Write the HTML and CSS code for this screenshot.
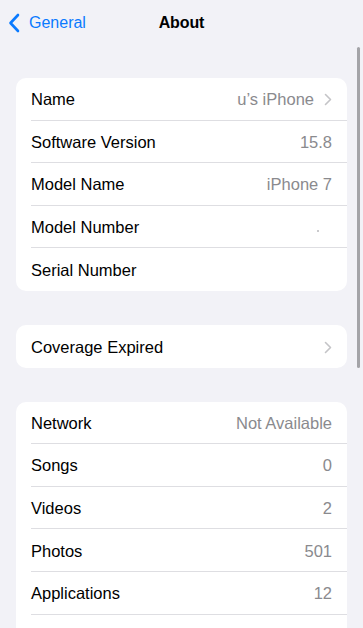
FILE: index.html
```html
<!DOCTYPE html>
<html lang="en">
<head>
<meta charset="utf-8">
<title>About</title>
<link rel="stylesheet" href="styles.css">
</head>
<body>
<div class="screen">
  <header class="nav">
    <a class="back">
      <svg class="back-icon" width="12" height="20" viewBox="0 0 12 20"><path d="M10 2 L2.5 10 L10 18" fill="none" stroke="#0a7aff" stroke-width="2.6" stroke-linecap="round" stroke-linejoin="round"/></svg>
      <span>General</span>
    </a>
    <h1 class="title">About</h1>
  </header>

  <main class="content">
    <section class="card">
      <div class="row"><div class="row-inner"><span class="label">Name</span><span class="value">u’s iPhone</span><svg class="chev" width="8" height="13" viewBox="0 0 8 13"><path d="M1.5 1.5 L6.5 6.5 L1.5 11.5" fill="none" stroke="#c4c4c7" stroke-width="1.6" stroke-linecap="round" stroke-linejoin="round"/></svg></div></div>
      <div class="row"><div class="row-inner"><span class="label">Software Version</span><span class="value">15.8</span></div></div>
      <div class="row"><div class="row-inner"><span class="label">Model Name</span><span class="value">iPhone 7</span></div></div>
      <div class="row"><div class="row-inner"><span class="label">Model Number</span><span class="value"><span class="dot"></span></span></div></div>
      <div class="row"><div class="row-inner last"><span class="label">Serial Number</span><span class="value"></span></div></div>
    </section>

    <section class="card">
      <div class="row"><div class="row-inner last"><span class="label">Coverage Expired</span><span class="value"></span><svg class="chev" width="8" height="13" viewBox="0 0 8 13"><path d="M1.5 1.5 L6.5 6.5 L1.5 11.5" fill="none" stroke="#c4c4c7" stroke-width="1.6" stroke-linecap="round" stroke-linejoin="round"/></svg></div></div>
    </section>

    <section class="card">
      <div class="row"><div class="row-inner"><span class="label">Network</span><span class="value">Not Available</span></div></div>
      <div class="row"><div class="row-inner"><span class="label">Songs</span><span class="value">0</span></div></div>
      <div class="row"><div class="row-inner"><span class="label">Videos</span><span class="value">2</span></div></div>
      <div class="row"><div class="row-inner"><span class="label">Photos</span><span class="value">501</span></div></div>
      <div class="row"><div class="row-inner"><span class="label">Applications</span><span class="value">12</span></div></div>
      <div class="row"><div class="row-inner"></div></div>
    </section>
  </main>
  <div class="scrollbar"></div>
</div>
</body>
</html>
```

FILE: styles.css
```css
html, body {
  margin: 0;
  padding: 0;
  height: 628px;
  overflow: hidden;
  background: #f2f2f7;
}

body {
  font-family: "Liberation Sans", Arial, sans-serif;
  -webkit-font-smoothing: antialiased;
}

.screen {
  position: relative;
  width: 363px;
  height: 628px;
  overflow: hidden;
}

.nav {
  position: relative;
  height: 44px;
  padding-top: 1px;
  box-sizing: border-box;
  display: flex;
  align-items: center;
  justify-content: center;
}

.back {
  position: absolute;
  left: 8px;
  top: 13px;
  display: flex;
  align-items: center;
  gap: 9px;
  color: #0a7aff;
  font-size: 16px;
}

.back-icon {
  display: block;
}

.title {
  margin: 0;
  font-size: 16px;
  font-weight: bold;
  color: #000;
  letter-spacing: -0.1px;
}

.content {
  padding: 34px 16px 0 16px;
  display: flex;
  flex-direction: column;
  gap: 34px;
}

.card {
  background: #fff;
  border-radius: 10px;
  overflow: hidden;
}

.row {
  padding-left: 15px;
}

.row-inner {
  height: 42.6px;
  box-sizing: border-box;
  border-bottom: 1px solid #dedee2;
  display: flex;
  align-items: center;
  padding-right: 15px;
  padding-top: 2px;
  font-size: 16.5px;
}

.row-inner.last {
  border-bottom: none;
}

.label {
  flex: 1;
  color: #000;
}

.value {
  color: #8a8a8e;
  display: flex;
  align-items: center;
}

.chev {
  margin-left: 10px;
  display: block;
}

.dot {
  display: block;
  width: 2px;
  height: 2px;
  border-radius: 1px;
  background: #b8b8bc;
  margin-right: 13px;
  margin-top: 6px;
}

.scrollbar {
  position: absolute;
  left: 357px;
  top: 47px;
  width: 3px;
  height: 321px;
  border-radius: 2px;
  background: #a4a4a8;
}
```
